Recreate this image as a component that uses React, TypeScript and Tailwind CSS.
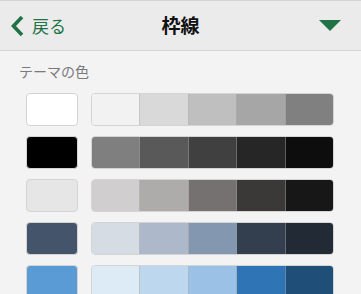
const ROWS = [
  { base: "#ffffff", shades: ["#f2f2f2", "#d9d9d9", "#bfbfbf", "#a6a6a6", "#808080"] },
  { base: "#000000", shades: ["#7f7f7f", "#595959", "#404040", "#262626", "#0d0d0d"] },
  { base: "#e7e6e6", shades: ["#d0cece", "#aeabab", "#757171", "#3b3838", "#171717"] },
  { base: "#44546a", shades: ["#d6dce4", "#adb9ca", "#8497b0", "#333f4f", "#222b35"] },
  { base: "#5b9bd5", shades: ["#ddebf7", "#bdd7ee", "#9bc2e6", "#2f75b5", "#1f4e78"] },
];

export default function App() {
  return (
    <div
      className="w-[361px] h-[294px] overflow-hidden bg-[#f3f3f3]"
      style={{ fontFamily: "'Noto Sans CJK JP', 'Noto Sans', sans-serif" }}
    >
      {/* Header */}
      <div className="relative h-[51px] flex items-center bg-[#ebebeb] border-t border-b border-[#d4d4d4]">
        <div className="flex items-center pl-[10px] gap-[8px] text-[#217346]">
          <svg width="14" height="22" viewBox="0 0 14 22">
            <path d="M12 2 L3.5 11 L12 20" fill="none" stroke="#217346" strokeWidth="3.6" />
          </svg>
          <span className="text-[17px] leading-none">戻る</span>
        </div>
        <div className="absolute left-0 right-0 text-center text-[19px] font-bold text-[#111] pointer-events-none">
          枠線
        </div>
        <svg className="ml-auto mr-[20px]" width="22" height="11" viewBox="0 0 22 11">
          <polygon points="0,0 22,0 11,11" fill="#217346" />
        </svg>
      </div>

      {/* Body */}
      <div className="pl-[19px] pt-[10px]">
        <div className="text-[14px] leading-[20px] text-[#7a7a7a]">テーマの色</div>
      </div>
      <div className="flex flex-col gap-[10px] pl-[26px] pt-[12px]">
        {ROWS.map((r, i) => (
          <div key={i} className="flex gap-[13px]">
            <div
              className="w-[52px] h-[33px] rounded-[4px] border border-[#d4d4d4]"
              style={{ background: r.base }}
            />
            <div className="w-[243px] h-[33px] flex rounded-[4px] overflow-hidden border border-[#d4d4d4] divide-x divide-[#9a9a9a]/50">
              {r.shades.map((c) => (
                <div key={c} className="flex-1" style={{ background: c }} />
              ))}
            </div>
          </div>
        ))}
      </div>
    </div>
  );
}
